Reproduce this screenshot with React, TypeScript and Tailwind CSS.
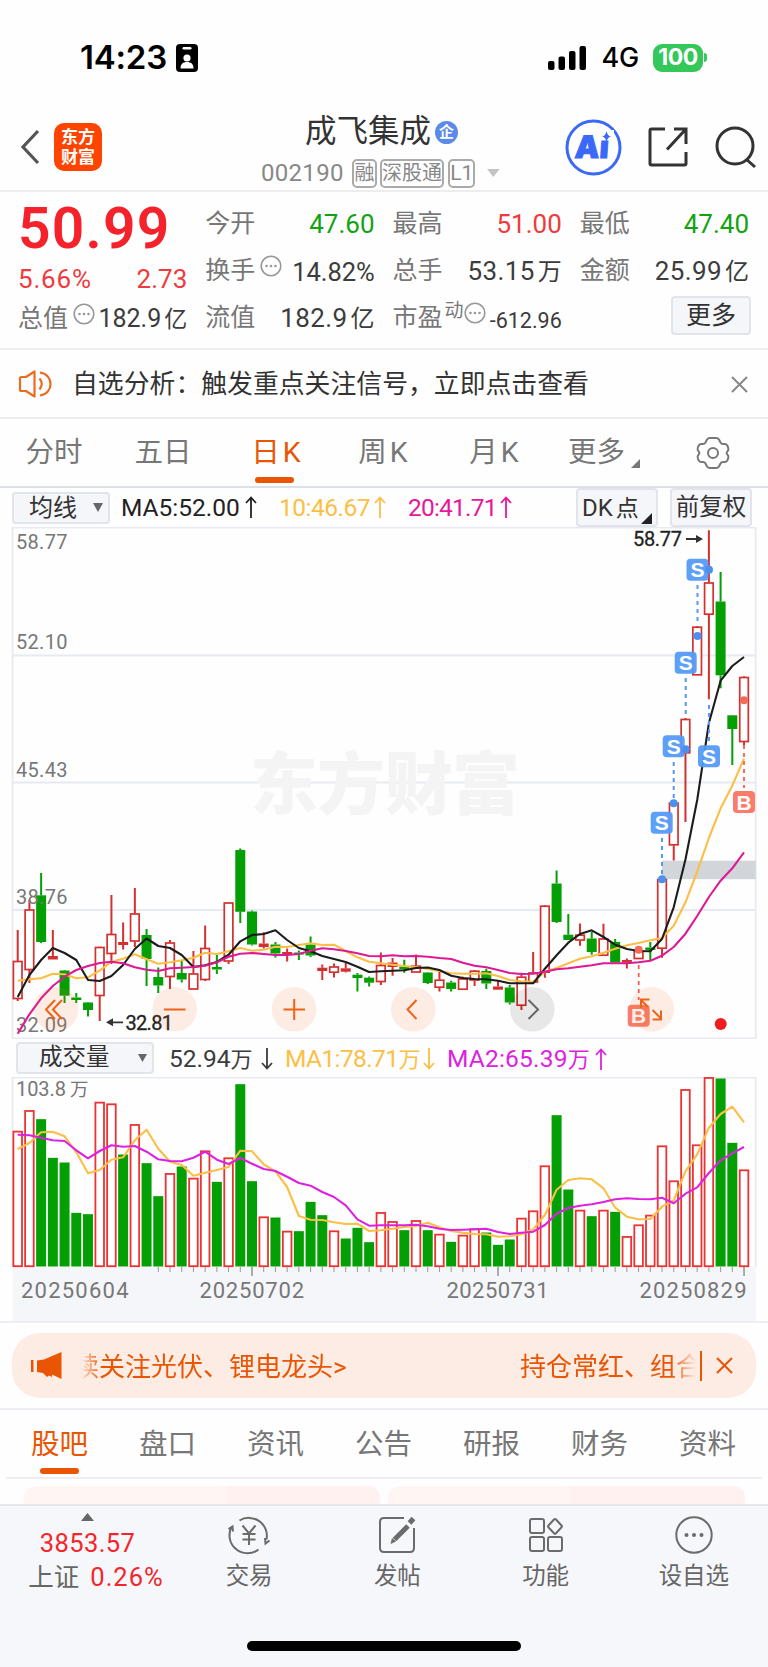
import React from 'react';
import { clsx } from 'clsx';

type Candle = [up: 0 | 1, high: number, top: number, bottom: number, low: number];

const STEP = 11.715;
const FIRST_X = 17.7;
const candleX = (i: number) => FIRST_X + i * STEP;

const candles: Candle[] = [
  [1, 930, 961, 999, 1001], [1, 900, 909.5, 970, 983], [0, 873, 895.3, 942, 943], [1, 930, 956, 959.5, 959.5],
  [0, 970, 970.5, 995.7, 1003], [0, 993, 997.5, 1000, 1003], [0, 1002, 1002.5, 1010, 1016.5], [1, 946.7, 947, 996, 1021],
  [1, 895, 934, 954, 964], [1, 922.5, 942, 945, 949.5], [1, 888, 913.5, 941.5, 947], [0, 929, 935, 959, 986],
  [0, 967.5, 977, 985.5, 993], [1, 940, 942.5, 977, 989], [0, 960.5, 973, 979.5, 982.5], [1, 951, 973.5, 989.5, 989.5],
  [1, 925.5, 948, 980, 981], [0, 955, 967, 969.5, 974], [1, 902, 902.5, 961.5, 964], [0, 848.5, 850, 911.8, 923],
  [0, 910.5, 911.5, 944.5, 945.5], [1, 932.3, 943.5, 947, 948.5], [0, 942, 944.5, 953.5, 957.5], [1, 948.5, 952, 955, 961.5],
  [0, 950.5, 952.5, 954.5, 960], [0, 936.5, 944.5, 955.5, 957], [1, 964.5, 967.7, 971, 980], [1, 963.5, 966.5, 972.7, 977.5],
  [1, 962.5, 968.3, 971.7, 972.5], [0, 973, 974.7, 978, 991.5], [0, 976.5, 977.7, 982.7, 986.5], [1, 952.5, 965, 982, 985],
  [1, 958, 962.5, 967, 975.7], [0, 959.7, 966.7, 969.3, 972.7], [1, 954.5, 965.7, 972.5, 972.5], [0, 972, 972.5, 983, 984],
  [1, 971.7, 979.7, 987.7, 991.5], [0, 980.7, 982.5, 989, 991.5], [1, 976.7, 978.5, 989.7, 989.7], [1, 970, 970.7, 980.5, 986],
  [0, 968.7, 971, 983.5, 989], [1, 980, 986.5, 989.7, 990], [0, 985, 987.5, 1002.5, 1004.5], [1, 972.7, 976.7, 1005.7, 1010],
  [1, 952, 972.5, 982.5, 982.5], [1, 905, 905.7, 972.7, 977.7], [0, 870.5, 883.5, 922, 923], [0, 914, 934.7, 940, 940],
  [1, 923.5, 934.7, 940.5, 945.7], [0, 931.7, 938.5, 952, 954.7], [1, 923.7, 938.5, 955.7, 956], [0, 939, 942, 962.5, 962.5],
  [1, 958.5, 960, 962.7, 968.5], [1, 949, 950.5, 959, 959], [0, 942, 947.5, 950, 960], [1, 878, 879, 948.7, 957.7],
  [1, 802, 802.7, 845.3, 860.5], [1, 718, 719, 753.3, 822], [1, 626, 626.7, 675.3, 675.3], [1, 530.3, 582.5, 614.7, 699.3],
  [0, 572, 601.5, 675.3, 688.3], [0, 715, 715.3, 729, 765], [1, 676.3, 677, 742, 745],
];

const ma5 = [
  997, 975, 960, 948, 953, 960, 980, 981, 976, 965, 949, 938.5, 946, 948, 955, 967, 965.3, 962, 954.7, 941.3, 935,
  934, 930.3, 940, 948, 951.3, 956, 959, 962, 966.7, 972, 971.3, 970.7, 970.3, 968, 967.5, 970, 975.7, 978, 979, 979.3,
  980.7, 983.3, 983.3, 983.3, 968.7, 955.3, 942.7, 934, 930.3, 937, 944.7, 949, 951, 951.3, 939, 907.3, 859.3, 800,
  723, 680.7, 666, 657,
];

const ma10 = [
  980.7, 979.3, 978.3, 973.7, 974.3, 978.3, 977.3, 970.7, 961.7, 958.7, 954.3, 959.3, 963.7, 962.3, 960.3, 957.7, 952.7,
  954, 951.3, 948, 950.7, 949.7, 946.7, 947, 945, 943.3, 945, 944.7, 951, 957.3, 961.7, 963.3, 964.7, 966, 967.3, 969,
  971, 973.3, 973.7, 973.7, 973.3, 976, 980, 981.3, 981.7, 971.7, 968, 963.3, 958.7, 956.3, 952.7, 948.7, 945.3, 943,
  940.3, 938, 925.7, 902.3, 871.7, 838, 808.3, 785.7, 758.7,
];

const ma20 = [
  1033.7, 1014.3, 998.3, 986, 976.7, 970, 966, 963, 961.7, 963.3, 967.3, 969.7, 971, 968.3, 967.7, 967, 965.7, 962.3,
  956.7, 953.7, 953, 954, 955, 955, 954, 950.7, 948.3, 949.3, 951, 953.3, 956, 956.3, 955.3, 956.3, 956, 956.7, 958, 959,
  962.7, 965.7, 967.3, 970, 973, 974, 973.7, 971.7, 969.3, 968.3, 966.7, 965.3, 963.3, 963.3, 963.3, 962.3, 960.7, 955.7,
  947, 933.7, 916, 897, 880.7, 868.3, 852.3,
];

// [up, top] of every volume bar, the baseline is at 695
const volumes: [0 | 1, number][] = [
  [1, 289], [1, 227], [0, 254], [0, 370], [0, 384], [0, 535], [0, 539], [1, 202], [1, 207], [0, 360], [1, 269], [0, 386],
  [0, 485], [1, 416], [0, 396], [1, 430], [1, 348], [0, 442], [1, 369], [0, 149], [0, 440], [1, 546], [0, 549], [1, 589],
  [0, 590], [0, 502], [0, 542], [1, 588], [0, 612], [0, 580], [0, 623], [1, 533], [1, 560], [0, 587], [1, 557], [0, 587],
  [1, 598], [0, 622], [1, 601], [1, 582], [0, 594], [0, 631], [0, 615], [1, 550], [1, 528], [1, 393], [0, 242], [0, 465],
  [1, 526], [0, 545], [1, 526], [0, 532], [1, 605], [1, 570], [1, 541], [1, 333], [1, 438], [1, 164], [1, 330], [1, 128],
  [0, 132], [0, 325], [1, 405],
];

const volMa1 = [
  342, 324, 292, 290, 304, 352, 415, 405, 374, 367, 316, 284, 341, 380, 390, 422, 413, 405, 396, 347, 349, 388, 409, 456,
  543, 554, 555, 562, 567, 566, 588, 586, 581, 576, 573, 563, 577, 588, 593, 597, 598, 605, 604, 598, 583, 540, 464, 435,
  430, 433, 460, 518, 545, 553, 552, 515, 496, 409, 358, 278, 237, 215, 262,
];

const volMa2 = [
  299, 301, 308, 316, 318, 346, 370, 348, 331, 335, 333, 350, 373, 378, 379, 368, 350, 374, 387, 369, 386, 402, 408, 425,
  444, 452, 471, 486, 511, 553, 572, 571, 571, 571, 569, 574, 581, 585, 584, 583, 581, 591, 597, 593, 590, 570, 536, 519,
  512, 508, 501, 493, 490, 492, 493, 488, 505, 476, 457, 414, 376, 355, 336,
];

const volY = (v: number) => v / 3 - 42;
const toPoints = (values: number[], y: (v: number) => number = (v) => v) =>
  values.map((v, i) => `${candleX(i).toFixed(1)},${y(v).toFixed(1)}`).join(' ');

const StatusBar = () => (
  <div className="flex h-[100px] items-center justify-between pl-[80px] pr-[61px] pt-[15px]">
    <div className="flex items-center gap-[9px]">
      <span className="font-['Inter'] text-[33px] leading-none font-semibold tracking-[-0.2px] text-black">14:23</span>
      <svg width="22" height="28" viewBox="0 0 22 28">
        <rect width="22" height="28" rx="4" fill="#000" />
        <rect x="6.5" y="3" width="9" height="2.6" rx="1.3" fill="#fff" />
        <circle cx="11" cy="14" r="3.6" fill="#fff" />
        <path d="M4.5 24.5c0-4.500 2.500-6.500 6.500-6.500s6.500 2 6.500 6.500z" fill="#fff" />
      </svg>
    </div>
    <div className="flex items-center">
      <svg width="39" height="24" viewBox="0 0 39 24" fill="#000">
        <rect x="0" y="15" width="6.500" height="9" rx="2" />
        <rect x="10.500" y="10.500" width="6.500" height="13.500" rx="2" />
        <rect x="21" y="5" width="6.500" height="19" rx="2" />
        <rect x="31.500" y="0" width="6.500" height="24" rx="2" />
      </svg>
      <span className="ml-[14px] font-['Inter'] text-[27px] leading-none font-medium tracking-[-0.2px] text-black">4G</span>
      <div className="ml-[14px] flex h-[28px] w-[50px] items-center justify-center rounded-[9px] bg-[#34c759] font-['Inter'] text-[23px] leading-none font-bold tracking-[-0.5px] text-white">
        100
      </div>
      <span className="ml-px h-[9px] w-[3px] rounded-r-full bg-[#34c759]" />
    </div>
  </div>
);

const Header = () => (
  <header className="flex h-[92px] border-b-2 border-[#ededf0]">
    <div className="flex w-[261px] items-center pt-[4px] pl-[20px]">
      <svg width="20" height="36" viewBox="0 0 20 36" fill="none" stroke="#555" strokeWidth="3.200">
        <path d="M18 2 3 18l15 16" />
      </svg>
      <div className="ml-[14px] flex h-[48px] w-[48px] flex-col items-center justify-center gap-[2px] rounded-[10px] bg-[#ff4400] text-[17px] leading-[18px] font-bold text-white">
        <span>东方</span>
        <span>财富</span>
      </div>
    </div>
    <div className="flex w-[239px] flex-col items-center pt-[15px]">
      <div className="flex h-[34px] items-center gap-[4px] pl-[2px]">
        <h1 className="text-[31.500px] leading-[34px] text-[#333]">成飞集成</h1>
        <span className="flex h-[23px] w-[23px] items-center justify-center rounded-full bg-[#5b8ae8] text-[15px] leading-none font-bold text-white">企</span>
      </div>
      <div className="mt-[9px] flex h-[30px] w-full items-center whitespace-nowrap text-[#888]">
        <span className="w-[83px] text-[24px] leading-none tracking-[0.300px]">002190</span>
        <span className="ml-[8px] flex h-[29px] w-[26px] items-center justify-center rounded-[5px] border-2 border-[#aaa] text-[20px] leading-none">融</span>
        <span className="ml-[3px] flex h-[29px] w-[65px] items-center justify-center rounded-[5px] border-2 border-[#aaa] text-[20px] leading-none">深股通</span>
        <span className="ml-[4px] flex h-[29px] w-[28px] items-center justify-center rounded-[5px] border-2 border-[#aaa] text-[21px] leading-none">L1</span>
        <svg className="ml-[12px]" width="13" height="8" viewBox="0 0 13 8"><path d="M0 0h13L6.500 8z" fill="#c4c4c4" /></svg>
      </div>
    </div>
    <div className="flex flex-1 items-center pt-[4px] pl-[65px]">
      <svg width="57" height="57" viewBox="0 0 57 57">
        <circle cx="28.500" cy="28.500" r="26.500" fill="none" stroke="#3b69f7" strokeWidth="3" />
        <text x="9" y="39.500" fontFamily="Inter" fontSize="31" fontWeight="900" fill="#3b69f7" stroke="#3b69f7" textLength="34" transform="skewX(-4) translate(3 0)">Ai</text>
        <rect x="36" y="11" width="13" height="10" fill="#fff" />
        <path d="M41.500 12q1 5 4.500 5.500-3.500.500-4.500 5.500-1-5-4.500-5.500 3.500-.500 4.500-5.500z" fill="#3b69f7" />
      </svg>
      <svg className="ml-[25px]" width="42" height="42" viewBox="0 0 42 42" fill="none" stroke="#333" strokeWidth="3">
        <path d="M18 3H4.500Q3 3 3 4.500v33Q3 39 4.500 39h33q1.500 0 1.500-1.500V26" />
        <path d="M27 3h12v15M38.500 3.500 20 23.500" />
      </svg>
      <svg className="ml-[26px]" width="44" height="44" viewBox="0 0 44 44" fill="none" stroke="#333" strokeWidth="3">
        <circle cx="20" cy="21" r="18" />
        <path d="m31 34 9 8" />
      </svg>
    </div>
  </header>
);

const MoreDots = () => (
  <svg width="22" height="22" viewBox="0 0 22 22">
    <circle cx="11" cy="11" r="9.800" fill="none" stroke="#999" strokeWidth="1.600" />
    <g fill="#999">
      <circle cx="6.500" cy="11" r="1.300" />
      <circle cx="11" cy="11" r="1.300" />
      <circle cx="15.500" cy="11" r="1.300" />
    </g>
  </svg>
);

interface StatProps {
  label: string;
  value?: string;
  unit?: string;
  tone?: string;
  children?: React.ReactNode;
}

const Stat = ({ label, value, unit, tone = 'text-[#3c3c3c]', children }: StatProps) => (
  <div className="flex h-[47px] items-center justify-between">
    <span className="flex items-center text-[25px] leading-none text-[#777]">
      {label}
      {children}
    </span>
    <span className={clsx('text-[26px] leading-none whitespace-nowrap', unit && 'tracking-[0.400px]', tone)}>
      {value}
      {unit && <span className="ml-[3px] text-[24px] tracking-normal">{unit}</span>}
    </span>
  </div>
);

const Quote = () => (
  <section className="grid h-[158px] grid-cols-4 gap-[19px] border-b-2 border-[#ededf0] px-[19px] pt-[8px]">
    <div className="-ml-px">
      <div className="flex h-[57px] items-center text-[57px] leading-none font-semibold tracking-[1.200px] text-[#f4232b]">50.99</div>
      <div className="flex h-[43px] items-center justify-between text-[26px] leading-none text-[#f03a3e]">
        <span className="tracking-[0.800px]">5.66%</span>
        <span>2.73</span>
      </div>
      <div className="flex h-[36px] items-center justify-between text-[25px] leading-none">
        <span className="flex items-center gap-[5px] text-[#777]">总值<span className="pb-[9px]"><MoreDots /></span></span>
        <span className="whitespace-nowrap text-[#3c3c3c]">182.9<span className="ml-[3px] text-[23px]">亿</span></span>
      </div>
    </div>
    <div className="-ml-px">
      <Stat label="今开" value="47.60" tone="text-[#12a312]" />
      <Stat label="换手" value="14.82%" tone="text-[#3c3c3c] text-[25.500px]! pt-[4px] tracking-[-0.1px]">
        <span className="ml-[5px] pb-[9px]"><MoreDots /></span>
      </Stat>
      <Stat label="流值" value="182.9" unit="亿" />
    </div>
    <div className="-ml-px">
      <Stat label="最高" value="51.00" tone="text-[#f03a3e]" />
      <Stat label="总手" value="53.15" unit="万" />
      <Stat label="市盈" value="-612.96" tone="text-[#3c3c3c] text-[21.500px]! pt-[6px]">
        <span className="ml-[2px] pb-[14px] text-[19px]">动</span>
        <span className="pb-[9px]"><MoreDots /></span>
      </Stat>
    </div>
    <div className="-ml-px">
      <Stat label="最低" value="47.40" tone="text-[#12a312]" />
      <Stat label="金额" value="25.99" unit="亿" />
      <button className="mt-[2px] ml-auto block h-[39px] w-[80px] translate-x-[2px] rounded-[4px] border-2 border-[#e2e4ec] bg-[#f5f6f9] text-[25px] leading-none text-[#333]">更多</button>
    </div>
  </section>
);

const Notice = () => (
  <section className="flex h-[69px] items-center border-b-2 border-[#ededf0] pt-px pr-[20px] pl-[18px]">
    <svg width="34" height="28" viewBox="0 0 34 28" fill="none" stroke="#ee6a1f" strokeWidth="2.200" strokeLinejoin="round">
      <path d="M2 8.500Q2 7 3.500 7H8l8.500-5.500v25L8 21H3.500Q2 21 2 19.500z" />
      <path d="M21.500 8.500q4.500 5.500 0 11M22 2.500c14 2 14 21 0 23" />
    </svg>
    <p className="ml-[20px] flex-1 pt-px text-[25.850px] leading-none whitespace-nowrap text-[#333]">自选分析：触发重点关注信号，立即点击查看</p>
    <svg width="17" height="17" viewBox="0 0 17 17" stroke="#888" strokeWidth="2"><path d="m1 1 15 15M16 1 1 16" /></svg>
  </section>
);

const periods = [
  { label: '分时', width: 'w-[108px]' },
  { label: '五日', width: 'w-[110px]' },
  { label: '日K', width: 'w-[116px]', active: true },
  { label: '周K', width: 'w-[98px]' },
  { label: '月K', width: 'w-[124px]' },
];

const PeriodTabs = () => (
  <nav className="flex h-[69px] border-b-2 border-[#dde0e6] text-[28.500px] leading-none text-[#777]">
    {periods.map((p) => (
      <div key={p.label} className={clsx('relative flex items-center justify-center pt-[2px]', p.width, p.active && 'text-[#ea5504]')}>
        <span>{p.label[0]}</span>
        <span className={p.label[1] === 'K' ? 'ml-[3px]' : ''}>{p.label[1]}</span>
        {p.active && <span className="absolute bottom-[3px] left-[37px] h-[6px] w-[39px] rounded-full bg-[#ea5504]" />}
      </div>
    ))}
    <div className="flex w-[94px] items-center justify-center pt-[2px] pl-[2px]">
      更多
      <svg className="mt-[19px] ml-[6px]" width="9" height="9" viewBox="0 0 9 9"><path d="M9 0v9H0z" fill="#777" /></svg>
    </div>
    <div className="flex w-[118px] items-center justify-center pl-[8px]">
      <svg width="34" height="34" viewBox="0 0 34 34" fill="none" stroke="#777" strokeWidth="2">
        <path d="M11 3.500Q12 2 14 2h6q2 0 3 1.500l1.500 3q.800 1.500 2.500 1.500h1.500q2 0 2.800 1.500Q33 13 32 14.500L31 16q-.700 1 0 2l1 1.500q1 1.500-.700 5Q30.500 26 28.500 26H27q-1.700 0-2.500 1.500l-1.500 3Q22 32 20 32h-6q-2 0-3-1.500l-1.500-3Q8.700 26 7 26H5.500q-2 0-2.800-1.500Q1 21 2 19.500L3 18q.700-1 0-2l-1-1.500Q1 13 2.700 9.500 3.500 8 5.500 8H7q1.700 0 2.500-1.500z" />
        <circle cx="17" cy="17" r="5" />
      </svg>
    </div>
  </nav>
);

const Arrow = ({ down }: { down?: boolean }) => (
  <svg className={clsx('inline-block', down && 'rotate-180')} width="12" height="22" viewBox="0 0 12 22" fill="none" stroke="currentColor" strokeWidth="1.800">
    <path d="M6 22V1.500M1 7l5-5.500L11 7" />
  </svg>
);

const ChartToolbar = () => (
  <div className="flex h-[39px] items-center pl-[12px] text-[24.500px] leading-none">
    <div className="flex h-[32px] w-[98px] items-center rounded-[4px] border-2 border-[#e2e4ec] bg-[#f5f6f9] pl-[15px] text-[24px] text-[#333]">
      均线
      <svg className="ml-[16px]" width="10" height="9" viewBox="0 0 10 9"><path d="M0 0h10L5 9z" fill="#666" /></svg>
    </div>
    <span className="ml-[11px] flex w-[136px] justify-between pt-[2px] text-[#222]">MA5:52.00<Arrow /></span>
    <span className="ml-[22px] flex w-[107px] justify-between pt-[2px] tracking-[-0.500px] text-[#fbbf45]">10:46.67<Arrow /></span>
    <span className="ml-[22px] flex w-[104px] justify-between pt-[2px] tracking-[-0.800px] text-[#e6179b]">20:41.71<Arrow /></span>
    <div className="ml-auto flex h-[39px] w-[82px] items-center rounded-[4px] border-2 border-[#e2e4ec] bg-[#f5f6f9] pl-[4px] text-[24px] text-[#333]">
      <span className="w-[56px] whitespace-nowrap">DK<span className="ml-[3px] text-[23px]">点</span></span>
      <svg className="mt-[22px] ml-[3px]" width="11" height="11" viewBox="0 0 11 11"><path d="M11 0v11H0z" fill="#222" /></svg>
    </div>
    <div className="mr-[16px] ml-[12px] flex h-[39px] w-[82px] items-center justify-center rounded-[4px] border-2 border-[#e2e4ec] bg-[#f5f6f9] text-[23.500px] text-[#333]">
      前复权
    </div>
  </div>
);

const signals: { x: number; y: number; kind: 'S' | 'B' }[] = [
  { x: 697.5, y: 569.7, kind: 'S' },
  { x: 685.7, y: 662.7, kind: 'S' },
  { x: 673.7, y: 746.3, kind: 'S' },
  { x: 709, y: 756.3, kind: 'S' },
  { x: 661.7, y: 822.7, kind: 'S' },
  { x: 744, y: 802, kind: 'B' },
  { x: 638.7, y: 1015.7, kind: 'B' },
];

const dots = [[709, 569.7], [697.5, 636], [685.7, 749.3], [673.7, 803.3], [662, 879.3]];
const dashes = [[697.5, 585, 622], [685.7, 678, 715], [673.7, 762, 800], [662, 838, 876], [709, 705, 742]];

const axisLabels = [
  ['58.77', 549], ['52.10', 649], ['45.43', 777], ['38.76', 903.5], ['32.09', 1032],
] as const;

const PriceChart = () => (
  <svg className="block" width="768" height="512" viewBox="0 527 768 512" fontFamily="Roboto, 'Noto Sans CJK SC', sans-serif">
    <path d="M12.500 527.500H755.700V1038.500H12.500zM12.500 655.500H755.700M12.500 782.500H755.700M12.500 910H755.700" fill="none" stroke="#e8eaf1" strokeWidth="1.800" />
    <text x="250" y="809" fontSize="68" fontWeight="900" fontFamily="'Noto Sans CJK SC'" fill="#f4f4f4" textLength="270">东方财富</text>
    <rect x="662" y="860.700" width="93.700" height="18.500" fill="#d2d5da" />
    {candles.map(([up, high, top, bottom, low], i) => {
      const x = candleX(i);
      const color = up ? '#d3302f' : '#049f04';
      const solid = !up || bottom - top < 5;
      return (
        <g key={i} stroke={color}>
          <path d={`M${x} ${high}V${top}M${x} ${bottom}V${low}`} strokeWidth="2" />
          {solid
            ? <rect x={x - 5} y={top} width="10" height={Math.max(bottom - top, 1.5)} fill={color} stroke="none" />
            : <rect x={x - 4.3} y={top + 0.5} width="8.6" height={bottom - top - 1} fill="#fff" strokeWidth="1.700" />}
        </g>
      );
    })}
    {axisLabels.map(([text, y]) => (
      <text key={text} x="16" y={y} fontSize="20" fill="#777" textLength="51.500">{text}</text>
    ))}
    <g fill="none" strokeWidth="2.100" strokeLinejoin="round">
      <polyline points={toPoints(ma10)} stroke="#fbbf45" />
      <polyline points={toPoints(ma5)} stroke="#1c1c1c" />
      <polyline points={toPoints(ma20)} stroke="#dd1a95" />
    </g>
    <g fontSize="20" fill="#222" stroke="#222" strokeWidth="0.300">
      <text x="633" y="546" textLength="49">58.77</text>
      <text x="125.500" y="1029.500" textLength="47.500">32.81</text>
    </g>
    <path d="M686 539h14M108 1022.300h15" stroke="#333" strokeWidth="1.800" />
    <path d="m703 539-7-4v8zM106 1022.300l7-4v8z" fill="#333" />
    <g stroke="#5598f5" strokeWidth="2" strokeDasharray="4 4">
      {dashes.map(([x, y1, y2]) => <path key={x} d={`M${x} ${y1}V${y2}`} />)}
    </g>
    <path d="M744 745V788M638.700 965V1000" stroke="#f4604f" strokeWidth="1.800" strokeDasharray="4 4" />
    {signals.map(({ x, y, kind }) => (
      <g key={`${x}-${kind}`}>
        <rect x={x - 11} y={y - 11} width="22" height="22" rx="4" fill={kind === 'S' ? '#559bf8' : '#fa7563'} fillOpacity="0.950" />
        <text x={x} y={y + 7.5} textAnchor="middle" fontSize="21" fontWeight="600" fontFamily="'Liberation Sans'" fill="#fff">{kind}</text>
      </g>
    ))}
    <g fill="#4a90f0">{dots.map(([x, y]) => <circle key={x} cx={x} cy={y} r="4" />)}</g>
    <g fill="#f46a5a">
      <circle cx="744" cy="700.300" r="4" />
      <circle cx="638.700" cy="949.700" r="4" />
    </g>
    <circle cx="720.700" cy="1024" r="6" fill="#f01d20" />
    <g fill="#ee6a1f" fillOpacity="0.120">
      <circle cx="56" cy="1009.300" r="22.300" />
      <circle cx="174.700" cy="1009.300" r="22.300" />
      <circle cx="294" cy="1009.300" r="22.300" />
      <circle cx="413.300" cy="1009.300" r="22.300" />
      <circle cx="651.700" cy="1009.300" r="22.300" />
    </g>
    <circle cx="532.300" cy="1009.300" r="22.300" fill="#000" fillOpacity="0.090" />
    <g fill="none" stroke="#ee6318" strokeWidth="2">
      <path d="m55 1000-9 9.500 9 9.500M62 1000l-9 9.500 9 9.500" />
      <path d="M164 1009.500h21.500M283.500 1009.500H305M294.200 999v21M416.500 1000l-9 9.500 9 9.500" />
      <path d="m648 1007-7-7M641 1008v-8.500h8.500M652.500 1010l9 9M661 1010.500v9h-8.500" />
    </g>
    <path d="m528.500 1000 9.500 9.500-9.500 9.500" fill="none" stroke="#666" strokeWidth="2" />
  </svg>
);

const VolumeToolbar = () => (
  <div className="flex h-[38px] items-center pl-[16px] text-[24.500px] leading-none">
    <div className="flex h-[32px] w-[138px] items-center rounded-[4px] border-2 border-[#e2e4ec] bg-[#f5f6f9] pl-[21px] text-[23.500px] text-[#333]">
      成交量
      <svg className="ml-[28px]" width="9" height="8" viewBox="0 0 9 8"><path d="M0 0h9L4.500 8z" fill="#666" /></svg>
    </div>
    <span className="ml-[15px] flex w-[104px] items-center justify-between pt-[2px] whitespace-nowrap text-[#3c3c3c]"><span>52.94<span className="text-[22px]">万</span></span><Arrow down /></span>
    <span className="ml-[12px] flex w-[150px] items-center justify-between pt-[2px] tracking-[-0.600px] whitespace-nowrap text-[#fbbf45]"><span>MA1:78.71<span className="text-[22px]">万</span></span><Arrow down /></span>
    <span className="ml-[12px] flex w-[160px] items-center justify-between pt-[2px] tracking-[0.200px] whitespace-nowrap text-[#dc22e0]"><span>MA2:65.39<span className="text-[22px]">万</span></span><Arrow /></span>
  </div>
);

const VolumeChart = () => (
  <svg className="block" width="768" height="244" viewBox="0 0 768 244" fontFamily="Roboto, 'Noto Sans CJK SC', sans-serif">
    <rect x="12.500" y="189.500" width="743.500" height="56" fill="#f5f6f9" />
    <path d="M12.500 190V.500H755.700V190" fill="none" stroke="#e8eaf1" strokeWidth="1.800" />
    <text x="16" y="19" fontSize="20" fill="#777" textLength="50">103.8</text>
    <text x="70" y="19" fontSize="18.500" fill="#777">万</text>
    {volumes.map(([up, top], i) => {
      const x = candleX(i);
      const y = volY(top);
      return up
        ? <rect key={i} x={x - 4.3} y={y + 0.3} width="8.6" height={188.900 - y} fill="#fff" stroke="#ec3232" strokeWidth="1.800" />
        : <rect key={i} x={x - 5} y={y - 0.5} width="10" height={190 - y} fill="#049f04" />;
    })}
    <g fill="none" strokeWidth="2.100" strokeLinejoin="round">
      <polyline points={toPoints(volMa1, volY)} stroke="#fbbf45" />
      <polyline points={toPoints(volMa2, volY)} stroke="#dc22e0" />
    </g>
    {volumes.map((_, i) => i >= 12 && (
      <path key={i} d={`M${candleX(i)} 190v${i % 21 === 20 ? 9 : 5}`} stroke="#999" strokeWidth={i % 21 === 20 ? 1.6 : 1} />
    ))}
    <g fontSize="22" fill="#777">
      <text x="21" y="221" textLength="107.500">20250604</text>
      <text x="199.500" y="221" textLength="104.500">20250702</text>
      <text x="446.500" y="221" textLength="102">20250731</text>
      <text x="639.500" y="221" textLength="107">20250829</text>
    </g>
  </svg>
);

const PromoBar = () => (
  <section className="border-y-2 border-[#ededf2] px-[12px] py-[10px]">
    <div className="flex h-[65px] items-center rounded-[28px] bg-[#fdece3] pl-[19px] text-[26px] leading-none text-[#ea5504]">
      <svg width="31" height="27" viewBox="0 0 31 27" fill="#ea5504">
        <path d="M0 8h2.500v12H0zM30.500 0v27L21 22.500v2.500l-3-1.500-2 1.500-4-4-6-1V8.500l7-1z" />
      </svg>
      <div className="ml-[19px] flex w-[615px] justify-between overflow-hidden pt-[6px] pb-[4px] whitespace-nowrap [mask-image:linear-gradient(to_right,transparent,black_20px,black_590px,transparent)]">
        <span className="-ml-[8px]">续关注光伏、锂电龙头&gt;</span>
        <span className="-mr-[6px]">持仓常红、组合</span>
      </div>
      <span className="ml-[4px] h-[30px] w-[1.500px] bg-[#ea5504]" />
      <svg className="ml-[14px]" width="17" height="17" viewBox="0 0 17 17" stroke="#ea5504" strokeWidth="2"><path d="m1 1 15 15M16 1 1 16" /></svg>
    </div>
  </section>
);

const sections = ['股吧', '盘口', '资讯', '公告', '研报', '财务', '资料'];

const SectionTabs = () => (
  <nav className="mx-[6px] grid h-[69px] grid-cols-7 border-b-2 border-[#ededf2] text-[28.500px] leading-none text-[#777]">
    {sections.map((label, i) => (
      <div key={label} className={clsx('relative flex items-center justify-center pt-[4px] pr-px', i === 0 && 'text-[#ea5504]')}>
        {label}
        {i === 0 && <span className="absolute bottom-[3px] h-[6px] w-[39px] rounded-full bg-[#ea5504]" />}
      </div>
    ))}
  </nav>
);

const FeedCards = () => (
  <div className="flex h-[25px] gap-[8px] overflow-hidden pt-[7px] pr-[23px] pl-[24px]">
    <div className="flex h-[40px] w-[356px] overflow-hidden rounded-[12px] bg-[#fff6f4]">
      <span className="ml-[203px] h-full flex-1 bg-[#fef1ef]" />
    </div>
    <div className="flex h-[40px] flex-1 overflow-hidden rounded-[12px] bg-[#fff6f4]">
      <span className="ml-[182px] h-full flex-1 bg-[#fef1ef]" />
    </div>
  </div>
);

const iconProps = { width: 44, height: 40, viewBox: '0 0 44 40', fill: 'none', stroke: '#6b6b6b', strokeWidth: 2 };

const actions = [
  {
    label: '交易',
    icon: (
      <svg {...iconProps}>
        <path d="M12.500 5.500A18 18 0 0 1 39.500 24.500M31.500 34.500A18 18 0 0 1 4.500 12M1.500 14l4-2.500.500 5M42.500 25.500l-4 3-.500-5.500" />
        <path d="m15.500 10.500 6.500 8 6.500-8M22 18.500V30M15.500 19h13M15.500 24.500h13" />
      </svg>
    ),
  },
  {
    label: '发帖',
    icon: (
      <svg {...iconProps}>
        <path d="M29 3H9Q5 3 5 7v26q0 4 4 4h26q4 0 4-4V13" />
        <path d="M33 11 19.500 24.500" strokeWidth="5" />
        <path d="m38.500 3.500-4 4.500" strokeWidth="5" />
        <path d="m17 23-1.500 6 5.500-2.500z" fill="#6b6b6b" stroke="none" />
      </svg>
    ),
  },
  {
    label: '功能',
    icon: (
      <svg {...iconProps}>
        <rect x="6" y="4" width="14" height="14" rx="2" />
        <rect x="6" y="22" width="14" height="14" rx="2" />
        <rect x="24" y="22" width="14" height="14" rx="2" />
        <path d="m30 4.500-5.500 6q-.800.900 0 1.800l5.500 6q1 1 2 0l5.500-6q.800-.900 0-1.800L32 4.500q-1-1-2 0z" />
      </svg>
    ),
  },
  {
    label: '设自选',
    icon: (
      <svg {...iconProps}>
        <circle cx="22" cy="20" r="17.700" />
        <g fill="#6b6b6b" stroke="none">
          <circle cx="14.500" cy="20" r="2" />
          <circle cx="22" cy="20" r="2" />
          <circle cx="29.500" cy="20" r="2" />
        </g>
      </svg>
    ),
  },
];

const BottomBar = () => (
  <footer className="h-[163px] border-t-2 border-[#e4e6ec] bg-[#f6f7fa]">
    <div className="flex h-[135px]">
      <div className="flex w-[175px] flex-col items-center pt-[7px]">
        <svg width="13" height="8" viewBox="0 0 13 8"><path d="M0 8h13L6.500 0z" fill="#666" /></svg>
        <span className="mt-[7px] text-[25.500px] leading-[30px] tracking-[0.400px] text-[#f4252b]">3853.57</span>
        <div className="mt-[4px] flex items-center gap-[11px] pl-[17px] text-[25.500px] leading-[30px]">
          <span className="text-[#666]">上证</span>
          <span className="tracking-[1px] text-[#f4252b]">0.26%</span>
        </div>
      </div>
      {actions.map(({ label, icon }) => (
        <div key={label} className="flex flex-1 flex-col items-center pt-[9px]">
          {icon}
          <span className="mt-[8px] text-[23.500px] leading-[26px] text-[#666]">{label}</span>
        </div>
      ))}
    </div>
    <div className="mx-auto h-[10px] w-[274px] rounded-full bg-black" />
  </footer>
);

export default function App() {
  return (
    <main className="h-[1667px] w-[768px] overflow-hidden bg-[#fefefe] font-['Roboto','Noto_Sans_CJK_SC',sans-serif]">
      <StatusBar />
      <Header />
      <Quote />
      <Notice />
      <PeriodTabs />
      <ChartToolbar />
      <PriceChart />
      <VolumeToolbar />
      <VolumeChart />
      <PromoBar />
      <SectionTabs />
      <FeedCards />
      <BottomBar />
    </main>
  );
}
